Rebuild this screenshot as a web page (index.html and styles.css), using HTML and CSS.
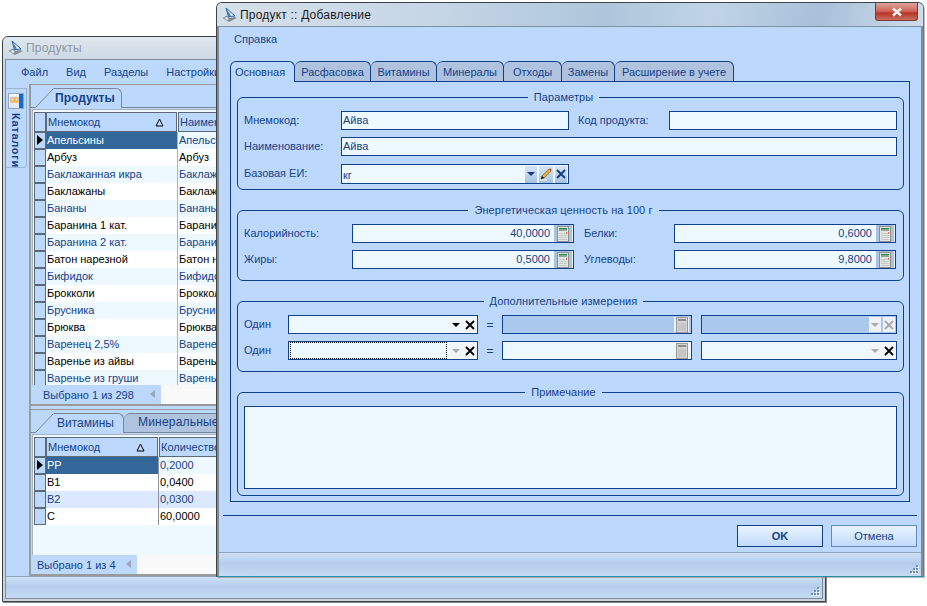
FILE: index.html
```html
<!DOCTYPE html>
<html lang="ru">
<head>
  <meta charset="UTF-8" />
  <title>Продукт :: Добавление</title>
  <link rel="stylesheet" href="styles.css">
</head>
<body>
  <svg class="defs" width="0" height="0">
    <symbol id="logo" viewBox="0 0 16 16">
      <path d="M4 1 L13 9 L6.500 9.500 Z" fill="#fff" stroke="#1f5f9f"/>
      <path d="M4.500 2 L9 8.500 L6.500 9 Z" fill="#2f78c0"/>
      <path d="M0.500 11 L5 8.500 L8 11 L12 10 L15 11 L7 15 Z" fill="#7f8d9c"/>
      <path d="M2 11 L5 10 L7 12 L5 13 Z" fill="#dfe5ea"/>
    </symbol>
    <symbol id="calc" viewBox="0 0 14 16">
      <rect x="1.500" y="0.500" width="11" height="15" fill="#e4e6e2" stroke="#8f8f8f"/>
      <rect x="3" y="2" width="8" height="1" fill="#14903c"/>
      <rect x="3" y="3" width="8" height="2" fill="#8fa896"/>
      <path d="M3 7.500h8M3 9.500h8M3 11.500h8M3 13.500h8" stroke="#c4c8c4" fill="none"/>
      <rect x="10" y="6" width="1" height="2" fill="#e8705e"/>
    </symbol>
    <symbol id="calc-off" viewBox="0 0 14 16">
      <rect x="1.500" y="0.500" width="11" height="15" fill="#d4d4d4" stroke="#9a9a9a"/>
      <rect x="3" y="2" width="8" height="2" fill="#8c8c8c"/>
      <path d="M3 7h8M3 9h8M3 11h8M3 13h8" stroke="#b8b8b8" fill="none"/>
    </symbol>
    <symbol id="sort" viewBox="0 0 9 9">
      <path d="M4.500 1 L8 8 L1 8 Z" fill="none" stroke="#000"/>
    </symbol>
    <symbol id="book" viewBox="0 0 16 16">
      <rect x="0.500" y="0.500" width="15" height="15" fill="#dfeaf6" stroke="#8fa6c8"/>
      <rect x="11" y="1" width="4" height="14" fill="#1268d8"/>
      <rect x="1" y="1" width="10" height="2" fill="#f4f8fd"/>
      <rect x="3" y="5" width="3" height="3" fill="none" stroke="#f0a030"/>
      <rect x="7" y="5" width="3" height="3" fill="none" stroke="#f0a030"/>
      <rect x="2.500" y="8" width="8" height="2" fill="#f4c060"/>
    </symbol>
    <symbol id="grip" viewBox="0 0 11 11">
      <path d="M8 2h2v2H8zM5 5h2v2H5zM8 5h2v2H8zM2 8h2v2H2zM5 8h2v2H5zM8 8h2v2H8z" fill="#f2f7fd"/>
      <path d="M7 1h2v2H7zM4 4h2v2H4zM7 4h2v2H7zM1 7h2v2H1zM4 7h2v2H4zM7 7h2v2H7z" fill="#6f8fb8"/>
    </symbol>
  </svg>

  <!-- Main window behind the dialog -->
  <div class="window back">
    <div class="titlebar">
      <svg class="logo"><use href="#logo"/></svg>
      <span class="title dim">Продукты</span>
    </div>
    <div class="back-body">
      <div class="menu">
        <span>Файл</span><span>Вид</span><span>Разделы</span><span>Настройки</span>
      </div>
      <div class="work">
        <div class="rail">
          <div class="rail-tab">
            <svg class="rail-icon"><use href="#book"/></svg>
            <span class="rail-text">Каталоги</span>
          </div>
        </div>
        <div class="panels">
          <div class="panel top-panel">
            <div class="doc-tabs">
              <svg class="slope" width="23" height="23" viewBox="0 0 23 23"><path d="M4.500 22.500L22.500 3.500V23H4Z" fill="#bdd8fd"/><path d="M0 22.500H4.500L22.500 3.500" fill="none" stroke="#7a8794"/></svg>
              <div class="doc-tab active strong">Продукты</div>
              <div class="doc-rest"></div>
            </div>
            <div class="grid">
              <div class="grid-head">
                <span class="ind"></span>
                <span class="hcell c1">Мнемокод<svg class="sort"><use href="#sort"/></svg></span>
                <span class="hcell c2">Наимен</span>
              </div>
              <div class="row sel"><span class="ind mark"></span><span class="cell c1">Апельсины</span><span class="cell c2">Апельсины</span></div>
              <div class="row"><span class="ind"></span><span class="cell c1">Арбуз</span><span class="cell c2">Арбуз</span></div>
              <div class="row alt"><span class="ind"></span><span class="cell c1">Баклажанная икра</span><span class="cell c2">Баклажанная</span></div>
              <div class="row"><span class="ind"></span><span class="cell c1">Баклажаны</span><span class="cell c2">Баклажаны</span></div>
              <div class="row alt"><span class="ind"></span><span class="cell c1">Бананы</span><span class="cell c2">Бананы</span></div>
              <div class="row"><span class="ind"></span><span class="cell c1">Баранина 1 кат.</span><span class="cell c2">Баранина</span></div>
              <div class="row alt"><span class="ind"></span><span class="cell c1">Баранина 2 кат.</span><span class="cell c2">Баранина</span></div>
              <div class="row"><span class="ind"></span><span class="cell c1">Батон нарезной</span><span class="cell c2">Батон н</span></div>
              <div class="row alt"><span class="ind"></span><span class="cell c1">Бифидок</span><span class="cell c2">Бифидок</span></div>
              <div class="row"><span class="ind"></span><span class="cell c1">Брокколи</span><span class="cell c2">Брокколи</span></div>
              <div class="row alt"><span class="ind"></span><span class="cell c1">Брусника</span><span class="cell c2">Брусника</span></div>
              <div class="row"><span class="ind"></span><span class="cell c1">Брюква</span><span class="cell c2">Брюква</span></div>
              <div class="row alt"><span class="ind"></span><span class="cell c1">Варенец 2,5%</span><span class="cell c2">Варенец</span></div>
              <div class="row"><span class="ind"></span><span class="cell c1">Варенье из айвы</span><span class="cell c2">Варенье</span></div>
              <div class="row alt"><span class="ind"></span><span class="cell c1">Варенье из груши</span><span class="cell c2">Варенье</span></div>
            </div>
            <div class="grid-status wide">
              <span class="status-blue">Выбрано 1 из 298<i class="left-arrow"></i></span>
            </div>
          </div>
          <div class="panel bottom-panel">
            <div class="doc-tabs">
              <svg class="slope" width="23" height="23" viewBox="0 0 23 23"><path d="M4.500 22.500L22.500 3.500V23H4Z" fill="#bdd8fd"/><path d="M0 22.500H4.500L22.500 3.500" fill="none" stroke="#7a8794"/></svg>
              <div class="doc-tab active small">Витамины</div>
              <div class="doc-tab other">Минеральные вещества</div>
              <div class="doc-rest"></div>
            </div>
            <div class="grid sub">
              <div class="grid-head">
                <span class="ind"></span>
                <span class="hcell c1">Мнемокод<svg class="sort"><use href="#sort"/></svg></span>
                <span class="hcell c2">Количество</span>
              </div>
              <div class="row sel"><span class="ind mark"></span><span class="cell c1">PP</span><span class="cell c2">0,2000</span></div>
              <div class="row"><span class="ind"></span><span class="cell c1">B1</span><span class="cell c2">0,0400</span></div>
              <div class="row alt2"><span class="ind"></span><span class="cell c1">B2</span><span class="cell c2">0,0300</span></div>
              <div class="row"><span class="ind"></span><span class="cell c1">C</span><span class="cell c2">60,0000</span></div>
            </div>
            <div class="grid-status">
              <span class="status-blue">Выбрано 1 из 4<i class="left-arrow"></i></span>
            </div>
          </div>
        </div>
      </div>
      <div class="statusbar"><svg class="grip"><use href="#grip"/></svg></div>
    </div>
  </div>

  <!-- Dialog on top -->
  <div class="window dialog">
    <div class="titlebar">
      <svg class="logo"><use href="#logo"/></svg>
      <span class="title">Продукт :: Добавление</span>
      <span class="close"><svg width="14" height="10" viewBox="0 0 14 10"><path d="M3 1.500L11 8.500M11 1.500L3 8.500" stroke="#f4f0ec" stroke-width="2.500" fill="none"/></svg></span>
    </div>
    <div class="dlg-body">
      <div class="dlg-menu">Справка</div>
      <div class="tabs">
        <span class="tab current">Основная</span>
        <span class="tab">Расфасовка</span>
        <span class="tab">Витамины</span>
        <span class="tab">Минералы</span>
        <span class="tab">Отходы</span>
        <span class="tab">Замены</span>
        <span class="tab">Расширение в учете</span>
      </div>
      <div class="tab-panel">
        <div class="group g-params">
          <span class="legend">Параметры</span>
          <div class="line">
            <label class="lbl w-name">Мнемокод:</label>
            <span class="field w-short">Айва</span>
            <label class="lbl w-code">Код продукта:</label>
            <span class="field grow"></span>
          </div>
          <div class="line">
            <label class="lbl w-name">Наименование:</label>
            <span class="field grow">Айва</span>
          </div>
          <div class="line tall">
            <label class="lbl w-name">Базовая ЕИ:</label>
            <span class="field w-short combo">
              <span class="combo-text low">кг</span>
              <span class="btn blue"><i class="down navy"></i></span>
              <span class="btn blue wide-btn">
                <svg width="14" height="14" viewBox="0 0 14 14"><path d="M1 13H8" stroke="#fff"/><path d="M2 12L3 9L10 2L12 4L5 11Z" fill="#e8b23a" stroke="#6b4a10" stroke-width=".6"/><path d="M10 2L12 4L13 3L11 1Z" fill="#d8603a"/><path d="M2 12L3 9L5 11Z" fill="#111"/></svg>
              </span>
              <span class="btn blue"><svg width="10" height="10" viewBox="0 0 10 10"><path d="M1 1L9 9M9 1L1 9" stroke="#12397a" stroke-width="1.800"/></svg></span>
            </span>
          </div>
        </div>

        <div class="group g-energy">
          <span class="legend">Энергетическая ценность на 100 г</span>
          <div class="line">
            <label class="lbl w-cal">Калорийность:</label>
            <span class="field w-num num">40,0000<span class="btn calc"><svg width="14" height="16"><use href="#calc"/></svg></span></span>
            <label class="lbl w-prot">Белки:</label>
            <span class="field w-num num">0,6000<span class="btn calc"><svg width="14" height="16"><use href="#calc"/></svg></span></span>
          </div>
          <div class="line">
            <label class="lbl w-cal">Жиры:</label>
            <span class="field w-num num">0,5000<span class="btn calc"><svg width="14" height="16"><use href="#calc"/></svg></span></span>
            <label class="lbl w-prot">Углеводы:</label>
            <span class="field w-num num">9,8000<span class="btn calc"><svg width="14" height="16"><use href="#calc"/></svg></span></span>
          </div>
        </div>

        <div class="group g-extra">
          <span class="legend">Дополнительные измерения</span>
          <div class="line">
            <label class="lbl w-one">Один</label>
            <span class="field w-combo combo">
              <span class="combo-text"></span>
              <span class="btn pale"><i class="down black"></i></span>
              <span class="btn pale"><svg width="10" height="10" viewBox="0 0 10 10"><path d="M1 1L9 9M9 1L1 9" stroke="#000" stroke-width="1.800"/></svg></span>
            </span>
            <span class="eq">=</span>
            <span class="field w-mid off combo"><span class="combo-text"></span><span class="btn white"><svg width="14" height="16"><use href="#calc-off"/></svg></span></span>
            <span class="field w-right off combo">
              <span class="combo-text"></span>
              <span class="btn white"><i class="down gray"></i></span>
              <span class="btn white"><svg width="10" height="10" viewBox="0 0 10 10"><path d="M1 1L9 9M9 1L1 9" stroke="#a8a8a8" stroke-width="1.800"/></svg></span>
            </span>
          </div>
          <div class="line">
            <label class="lbl w-one">Один</label>
            <span class="field w-combo combo">
              <span class="combo-text focus"></span>
              <span class="btn pale"><i class="down gray"></i></span>
              <span class="btn pale"><svg width="10" height="10" viewBox="0 0 10 10"><path d="M1 1L9 9M9 1L1 9" stroke="#000" stroke-width="1.800"/></svg></span>
            </span>
            <span class="eq">=</span>
            <span class="field w-mid combo"><span class="combo-text"></span><span class="btn pale"><svg width="14" height="16"><use href="#calc-off"/></svg></span></span>
            <span class="field w-right combo">
              <span class="combo-text"></span>
              <span class="btn pale"><i class="down gray"></i></span>
              <span class="btn pale"><svg width="10" height="10" viewBox="0 0 10 10"><path d="M1 1L9 9M9 1L1 9" stroke="#000" stroke-width="1.800"/></svg></span>
            </span>
          </div>
        </div>

        <div class="group g-note">
          <span class="legend">Примечание</span>
          <div class="note"></div>
        </div>
      </div>
      <div class="dlg-rule"></div>
      <div class="dlg-buttons">
        <button class="push main">OK</button>
        <button class="push">Отмена</button>
      </div>
      <div class="statusbar"><svg class="grip"><use href="#grip"/></svg></div>
    </div>
  </div>
</body>
</html>
```
FILE: styles.css
```css
* {
  box-sizing: border-box;
}

html, body {
  margin: 0;
  padding: 0;
  width: 927px;
  height: 606px;
  overflow: hidden;
  background: #fff;
  font-family: "Liberation Sans", Arial, sans-serif;
  font-size: 11px;
  color: #15428b;
}

.defs {
  display: block;
  height: 0;
}

/* Windows */
.window {
  position: absolute;
  display: flex;
  flex-direction: column;
  border: 1px solid #3c4248;
  border-radius: 6px 6px 0 0;
  background: #c9d6e2;
  overflow: hidden;
}

.back {
  left: 2px;
  top: 36px;
  width: 824px;
  height: 566px;
  box-shadow: 1px 1px 0 #8a8a8a;
}

.dialog {
  left: 216px;
  top: 2px;
  width: 708px;
  height: 575px;
  border-right-color: #3a8f9f;
  border-bottom-color: #2a8fa8;
  box-shadow: 1px 1px 0 rgba(120,120,120,.5);
}

.titlebar {
  flex: 0 0 23px;
  display: flex;
  align-items: center;
  gap: 2px;
  padding-left: 5px;
  background: linear-gradient(100deg, #d6e0ea 0%, #c6d6e6 30%, #aec6dc 55%, #c0d4e6 70%, #a8c0da 85%, #cfdcea 100%);
}

.back .titlebar {
  flex-basis: 22px;
  background: linear-gradient(180deg, #dfe7ee, #cdd9e4);
}

.logo {
  width: 16px;
  height: 16px;
}

.title {
  font-size: 12px;
  letter-spacing: .2px;
  color: #1a1a1a;
}

.title.dim {
  color: #8b98a4;
}

.close {
  margin-left: auto;
  margin-right: 5px;
  align-self: flex-start;
  width: 43px;
  height: 18px;
  display: flex;
  align-items: center;
  justify-content: center;
  border: 1px solid #7a3a36;
  border-top: 0;
  border-radius: 0 0 3px 3px;
  background: linear-gradient(180deg, #e0a298 0%, #cf6a5e 45%, #b8362a 60%, #c8705e 100%);
}

/* Main window */
.back-body {
  flex: 1;
  min-height: 0;
  display: flex;
  flex-direction: column;
  margin: 0 2px 2px;
  border: 1px solid #7f8c98;
  background: #bdd8fd;
}

.menu {
  flex: 0 0 24px;
  display: flex;
  align-items: center;
  gap: 18px;
  padding-left: 15px;
}

.work {
  flex: 1;
  min-height: 0;
  display: flex;
}

.rail {
  flex: 0 0 23px;
  padding-top: 4px;
}

.rail-tab {
  width: 21px;
  height: 80px;
  display: flex;
  flex-direction: column;
  align-items: center;
  gap: 4px;
  padding-top: 4px;
  border: 1px solid #9fb4cc;
  border-left: 0;
  border-radius: 0 0 4px 0;
}

.rail-icon {
  flex: none;
  width: 16px;
  height: 16px;
}

.rail-text {
  writing-mode: vertical-rl;
  font-weight: bold;
  letter-spacing: .7px;
}

.panels {
  flex: 1;
  min-width: 0;
  display: flex;
  flex-direction: column;
  gap: 3px;
  border-top: 1px solid #9a9a9a;
  border-left: 2px solid #9a9a9a;
}

.panel {
  display: flex;
  flex-direction: column;
}

.top-panel {
  height: 321px;
  flex: none;
  border-bottom: 2px solid #9a9a9a;
}

.bottom-panel {
  flex: 1;
  min-height: 0;
  border-top: 1px solid #9a9a9a;
  border-bottom: 2px solid #9a9a9a;
}

.doc-tabs {
  flex: 0 0 23px;
  display: flex;
  align-items: flex-end;
}

.slope {
  display: block;
  flex: none;
}

.doc-tab {
  flex: none;
  height: 20px;
  padding: 0 0 2px 1px;
  display: flex;
  align-items: center;
  white-space: nowrap;
  font-size: 12px;
  border: 1px solid #7a8794;
  border-bottom: 0;
  border-left: 0;
  border-radius: 0 6px 0 0;
  background: #bdd8fd;
}

.doc-tab.strong {
  font-weight: bold;
  width: 68px;
}

.doc-tab.small {
  width: 70px;
  padding-left: 3px;
}

.doc-tab.other {
  width: 170px;
  padding-left: 14px;
  letter-spacing: .2px;
  border-radius: 6px 6px 0 0;
  background: #afc2de;
  border-bottom: 1px solid #7a8794;
}

.doc-rest {
  flex: 1;
  height: 1px;
  background: #7a8794;
}

/* Grids */
.grid {
  flex: 1;
  min-height: 0;
  margin: 1px 0 0 1px;
  padding-top: 2px;
  border: 1px solid #a6b2be;
  border-bottom: 0;
  overflow: hidden;
  background: #eef8ff;
}

.grid-head, .row {
  display: flex;
  height: 17px;
}

.grid-head {
  height: 20px;
}

.ind {
  flex: 0 0 12px;
  margin-left: 1px;
  background: #bdd8fd;
  border: 1px solid #5c6a78;
  position: relative;
}

.mark::after {
  content: "";
  position: absolute;
  left: 2px;
  top: 2px;
  border-left: 6px solid #000;
  border-top: 5px solid transparent;
  border-bottom: 5px solid transparent;
}

.hcell {
  flex: none;
  display: flex;
  align-items: center;
  justify-content: space-between;
  padding: 0 12px 0 1px;
  background: #bdd8fd;
  border: 1px solid #5c6a78;
  margin-right: 1px;
}

.hcell.c1 {
  width: 131px;
}

.sub .hcell.c1 {
  width: 112px;
}

.hcell.c2 {
  width: 120px;
  white-space: nowrap;
}

.sort {
  width: 9px;
  height: 9px;
}

.cell {
  display: flex;
  align-items: center;
  padding: 0 0 2px 1px;
  white-space: nowrap;
  overflow: hidden;
}

.cell.c1 {
  flex: 0 0 132px;
  border-right: 1px solid #aeb4bb;
}

.sub .cell.c1 {
  flex: 0 0 113px;
  border-right: 1px solid #8e949b;
}

.row {
  color: #000;
  background: #fff;
}

.row.alt {
  color: #15428b;
  background: #eef8ff;
}

.row.alt2 {
  color: #15428b;
  background: #dbe8fd;
}

.row.sel {
  background: #eef8ff;
  color: #15428b;
}

.row.sel .cell.c1 {
  color: #fff;
  background: #336699;
}

.grid-status {
  flex: 0 0 19px;
  display: flex;
  margin-left: 1px;
  background: repeating-conic-gradient(#f4f4f4 0 25%, #fff 0 50%) 0 0 / 2px 2px;
}

.status-blue {
  display: flex;
  align-items: center;
  width: 105px;
  padding-left: 5px;
  background: #bdd8fd;
  position: relative;
  white-space: nowrap;
}

.wide .status-blue {
  width: 129px;
  padding-left: 11px;
}

.left-arrow {
  position: absolute;
  right: 6px;
  top: 5px;
  border-right: 5px solid #9aa8b8;
  border-top: 4px solid transparent;
  border-bottom: 4px solid transparent;
}

.statusbar {
  flex: 0 0 22px;
  position: relative;
  border-top: 1px solid #8fa6c0;
  background: linear-gradient(180deg, #cfe0f6 0%, #b4cdec 45%, #c6dbf5 100%);
}

.grip {
  position: absolute;
  right: 1px;
  bottom: 1px;
  width: 11px;
  height: 11px;
}

/* Dialog */
.dlg-body {
  flex: 1;
  min-height: 0;
  display: flex;
  flex-direction: column;
  border-top: 1px solid #7f8f9e;
  border-left: 2px solid #7f8c98;
  border-right: 2px solid #7f8c98;
  background: #bdd8fd;
}

.dlg-menu {
  flex: none;
  height: 34px;
  padding: 6px 0 0 15px;
}

.tabs {
  flex: none;
  display: grid;
  grid-template-columns: 65px 76px 66px 67px 58px 53px 119px;
  width: max-content;
  height: 20px;
  margin-left: 11px;
}

.tab {
  height: 20px;
  display: flex;
  align-items: center;
  justify-content: center;
  white-space: nowrap;
  border: 1px solid #10408c;
  border-bottom: 0;
  border-left-width: 0;
  border-radius: 6px 6px 0 0;
  background: #afc2de;
}

.tab.current {
  height: 21px;
  z-index: 1;
  padding-right: 5px;
  border-left-width: 1px;
  background: #bdd8fd;
}

.tab-panel {
  flex: none;
  width: 680px;
  height: 421px;
  margin-left: 11px;
  padding: 15px 5px 0 6px;
  border: 1px solid #10408c;
}

.group {
  position: relative;
  margin-bottom: 20px;
  padding: 13px 6px 0;
  border: 1px solid #10408c;
  border-radius: 6px;
}

.legend {
  position: absolute;
  left: 0;
  right: 14px;
  top: -8px;
  width: max-content;
  margin: 0 auto;
  padding: 0 6px;
  line-height: 14px;
  letter-spacing: .1px;
  background: #bdd8fd;
}

.g-params { height: 93px; }
.g-energy { height: 71px; }
.g-extra { height: 71px; }
.g-note { height: 104px; margin-bottom: 0; }

.line {
  display: flex;
  align-items: center;
  height: 19px;
  margin-bottom: 7px;
}

.line.tall {
  height: 20px;
  margin-top: 8px;
}

.lbl {
  flex: none;
  padding-bottom: 2px;
  white-space: nowrap;
}

.w-name { width: 97px; }
.w-code { width: 91px; margin-left: 9px; }
.w-cal { width: 108px; }
.w-prot { width: 90px; margin-left: 10px; }
.w-one { width: 44px; }

.field {
  height: 100%;
  display: flex;
  align-items: center;
  padding: 0 0 2px 1px;
  border: 1px solid #10408c;
  background: #eef8ff;
  white-space: nowrap;
}

.field.combo {
  padding: 0 1px 0 1px;
}

.grow { flex: 1; }
.w-short { width: 228px; flex: none; }
.w-num { width: 222px; flex: none; }
.w-combo { width: 190px; flex: none; }
.w-mid { width: 190px; flex: none; }
.w-right { width: 196px; flex: none; margin-left: 9px; }

.field.off {
  background: #abc8ee;
}

.num {
  justify-content: flex-end;
  padding-right: 1px;
}

.btn {
  flex: none;
  width: 12px;
  height: 15px;
  margin-left: 2px;
  display: flex;
  align-items: center;
  justify-content: center;
}

.btn.blue {
  height: 17px;
  background: linear-gradient(180deg, #d6e6fa, #a6c2e2);
}

.btn.wide-btn {
  width: 14px;
}

.btn.pale {
  background: #f2f5f8;
}

.btn.white {
  background: #eef2f6;
}

.btn.calc {
  width: 18px;
  height: 17px;
  margin: 2px 0 0 4px;
  background: #a8c4e0;
}

.combo-text {
  flex: 1;
  height: 100%;
  display: flex;
  align-items: center;
}

.combo-text.low {
  padding-top: 2px;
}

.combo-text.focus {
  margin: 1px 1px 1px 0;
  border: 1px dotted #000;
}

.w-mid .btn {
  width: 15px;
  margin-right: 1px;
}

.down {
  width: 0;
  height: 0;
  border-left: 4px solid transparent;
  border-right: 4px solid transparent;
}

.down.navy { border-top: 4px solid #12397a; }
.down.black { border-top: 4px solid #000; }
.down.gray { border-top: 4px solid #aaa; }

.eq {
  flex: 0 0 24px;
  text-align: center;
  font-size: 12px;
}

.note {
  height: 83px;
  border: 1px solid #10408c;
  background: #eef8ff;
}

.dlg-rule {
  flex: none;
  height: 1px;
  margin: 13px 4px 0 4px;
  background: #10408c;
}

.dlg-buttons {
  flex: 1;
  display: flex;
  justify-content: flex-end;
  gap: 8px;
  padding: 9px 4px 0 0;
}

.push {
  width: 86px;
  height: 22px;
  padding: 0;
  font: inherit;
  color: #15428b;
  border: 1px solid #5f8cbc;
  background: linear-gradient(180deg, #e9f3fe, #c2dbfb);
}

.push.main {
  font-weight: bold;
  border-color: #10408c;
}

.dialog .statusbar {
  flex: 0 0 24px;
}
```
